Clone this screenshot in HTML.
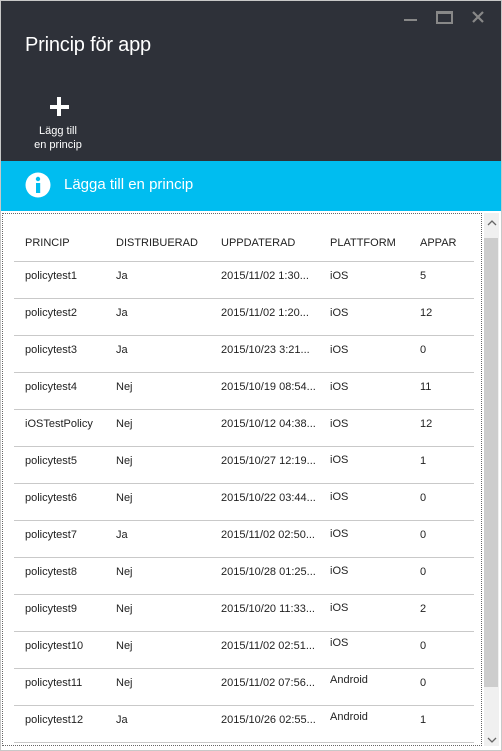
<!DOCTYPE html>
<html><head><meta charset="utf-8"><style>
*{margin:0;padding:0;box-sizing:border-box}
body{width:502px;height:751px;overflow:hidden;background:#fff;font-family:"Segoe UI","Liberation Sans",sans-serif;position:relative}
.frame{position:absolute;left:0;top:0;width:502px;height:751px;border:1px solid #c8c8c8}
.hdr{position:absolute;left:1px;top:1px;width:500px;height:160px;background:#2e3139}
.title{position:absolute;left:24px;top:33px;color:#fff;font-size:20px;letter-spacing:-0.2px}
.btn{position:absolute;left:28px;top:124px;width:60px;text-align:center;color:#fff;font-size:11px;line-height:14px}
.info{position:absolute;left:1px;top:161px;width:500px;height:50px;background:#00bdf0}
.info .t{position:absolute;left:63px;top:15px;color:#fff;font-size:15px}
.content{position:absolute;left:2px;top:213px;width:480px;height:533px;border:1px dotted #666}
.sb{position:absolute;left:484px;top:213px;width:15px;height:533px;background:#f0f0f0}
.thumb{position:absolute;left:484px;top:238px;width:14px;height:449px;background:#cdcdcd}
.c{position:absolute;font-size:11px;color:#222;white-space:nowrap}
.line{position:absolute;left:14px;width:460px;height:1px;background:#c9c9c9}
</style></head><body>
<div class="frame"></div>
<div class="hdr">
<svg style="position:absolute;left:400px;top:10px" width="90" height="16">
<rect x="3" y="8" width="13" height="2" fill="#888"/>
<rect x="36" y="0" width="15" height="12" fill="none" stroke="#888" stroke-width="2"/><rect x="36" y="0" width="15" height="3" fill="#888"/>
<path d="M72 1 L82 11 M82 1 L72 11" stroke="#888" stroke-width="2.2"/>
</svg>
<div class="title">Princip för app</div>
<svg style="position:absolute;left:48px;top:95px" width="22" height="22"><rect x="8" y="1" width="4" height="19" fill="#fff"/><rect x="1" y="9" width="19" height="4" fill="#fff"/></svg>
</div>
<div class="btn">Lägg till<br>en princip</div>
<div class="info">
<svg style="position:absolute;left:24px;top:11px" width="26" height="26"><circle cx="13" cy="13" r="12.5" fill="#fff"/><circle cx="13" cy="7" r="2.2" fill="#00bdf0"/><rect x="11" y="11" width="4.2" height="10" fill="#00bdf0"/></svg>
<div class="t">Lägga till en princip</div>
</div>
<div class="content"></div>
<div class="sb"></div>
<svg style="position:absolute;left:486px;top:218px" width="12" height="10"><path d="M2 7 L6 3 L10 7" fill="none" stroke="#666" stroke-width="1.3"/></svg>
<svg style="position:absolute;left:486px;top:735px" width="12" height="10"><path d="M2 3 L6 7 L10 3" fill="none" stroke="#666" stroke-width="1.3"/></svg>
<div class="thumb"></div>
<div class="c" style="left:25px;top:237px">PRINCIP</div>
<div class="c" style="left:116px;top:237px">DISTRIBUERAD</div>
<div class="c" style="left:221px;top:237px">UPPDATERAD</div>
<div class="c" style="left:330px;top:237px">PLATTFORM</div>
<div class="c" style="left:420px;top:237px">APPAR</div>
<div id="rows"></div>
<script>
var d=[["policytest1","Ja","2015/11/02 1:30...","iOS","5"],["policytest2","Ja","2015/11/02 1:20...","iOS","12"],["policytest3","Ja","2015/10/23 3:21...","iOS","0"],["policytest4","Nej","2015/10/19 08:54...","iOS","11"],["iOSTestPolicy","Nej","2015/10/12 04:38...","iOS","12"],["policytest5","Nej","2015/10/27 12:19...","iOS","1"],["policytest6","Nej","2015/10/22 03:44...","iOS","0"],["policytest7","Ja","2015/11/02 02:50...","iOS","0"],["policytest8","Nej","2015/10/28 01:25...","iOS","0"],["policytest9","Nej","2015/10/20 11:33...","iOS","2"],["policytest10","Nej","2015/11/02 02:51...","iOS","0"],["policytest11","Nej","2015/11/02 07:56...","Android","0"],["policytest12","Ja","2015/10/26 02:55...","Android","1"]];
var x=[25,116,221,330,420],h="";
for(var i=0;i<14;i++)h+='<div class="line" style="top:'+(261+i*37)+'px"></div>';
d.forEach(function(r,i){var t=270+i*37;r.forEach(function(v,j){var tt=t;if(j==3&&i>=5)tt-=(i>=10?3:1);h+='<div class="c" style="left:'+x[j]+'px;top:'+tt+'px">'+v+'</div>';});});
document.getElementById("rows").innerHTML=h;
</script>
</body></html>
